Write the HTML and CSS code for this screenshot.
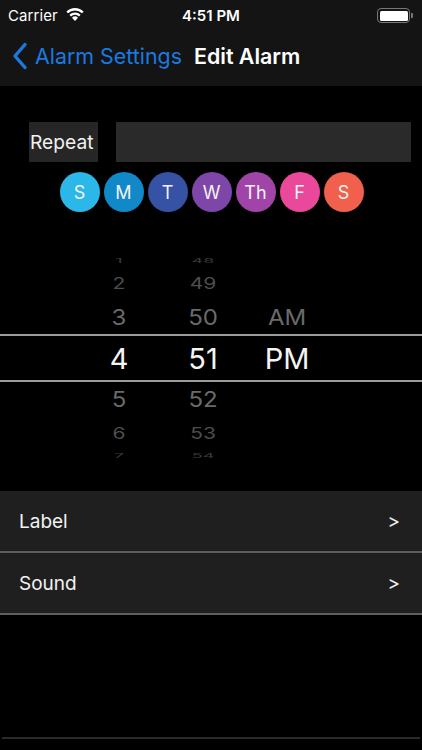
FILE: index.html
```html
<!DOCTYPE html>
<html>
<head>
<meta charset="utf-8">
<link rel="stylesheet" href="styles.css">
</head>
<body>
<div class="screen">
  <header class="top">
    <div class="status">
      <div class="status-left">
        <span class="carrier">Carrier</span>
        <svg class="wifi" width="20" height="15" viewBox="0 0 20 15">
          <path d="M10 14 L7 10.8 A4.3 4.3 0 0 1 13 10.8 Z" fill="#fff"/>
          <path d="M5.2 8.6 A6.9 6.9 0 0 1 14.8 8.6" stroke="#fff" stroke-width="2.3" fill="none"/>
          <path d="M2.2 5.5 A11 11 0 0 1 17.8 5.5" stroke="#fff" stroke-width="2.3" fill="none"/>
        </svg>
      </div>
      <span class="time">4:51 PM</span>
      <div class="battery"><div class="battery-fill"></div><div class="battery-tip"></div></div>
    </div>
    <nav class="navbar">
      <svg class="chev" width="16" height="28" viewBox="0 0 16 28"><path d="M13 2.5 L3 14 L13 25.5" stroke="#1a7ae0" stroke-width="3.4" fill="none" stroke-linecap="round" stroke-linejoin="round"/></svg>
      <span class="back">Alarm Settings</span>
      <span class="title">Edit Alarm</span>
    </nav>
  </header>

  <section class="repeat">
    <div class="repeat-row">
      <div class="repeat-label">Repeat</div>
      <div class="repeat-field"></div>
    </div>
    <div class="days">
      <span class="day d1">S</span>
      <span class="day d2">M</span>
      <span class="day d3">T</span>
      <span class="day d4">W</span>
      <span class="day d5">Th</span>
      <span class="day d6">F</span>
      <span class="day d7">S</span>
    </div>
  </section>

  <section class="picker">
    <div class="prow r0 top0"><span class="c">1</span><span class="c">48</span><span class="c"></span></div>
    <div class="prow r1"><span class="c">2</span><span class="c">49</span><span class="c"></span></div>
    <div class="prow r2"><span class="c">3</span><span class="c">50</span><span class="c">AM</span></div>
    <div class="prow sel"><span class="c">4</span><span class="c">51</span><span class="c">PM</span></div>
    <div class="prow r2"><span class="c">5</span><span class="c">52</span><span class="c"></span></div>
    <div class="prow r1"><span class="c">6</span><span class="c">53</span><span class="c"></span></div>
    <div class="prow r0"><span class="c">7</span><span class="c">54</span><span class="c"></span></div>
  </section>

  <section class="list">
    <div class="item"><span>Label</span><span class="arrow">&gt;</span></div>
    <div class="item"><span>Sound</span><span class="arrow">&gt;</span></div>
  </section>

  <div class="bottom-line"></div>
</div>
</body>
</html>
```
FILE: styles.css
```css
* { box-sizing: border-box; }
html, body { margin: 0; padding: 0; background: #000; }
body { font-family: Inter, "Noto Sans", "Liberation Sans", sans-serif; color: #fff; }
.screen { width: 422px; height: 750px; overflow: hidden; background: #000; display: flex; flex-direction: column; }

.top { background: #141414; height: 86px; flex-shrink: 0; }
.status { height: 30px; display: flex; align-items: center; justify-content: space-between; padding: 0 9px 0 8px; position: relative; }
.status-left { display: flex; align-items: center; gap: 7px; }
.carrier { font-size: 15px; letter-spacing: 0.1px; }
.wifi { margin-top: -2px; }
.time { position: absolute; left: 0; right: 0; text-align: center; font-size: 15px; font-weight: 600; pointer-events: none; }
.battery { display: flex; align-items: center; }
.battery-fill { width: 33px; height: 15px; border: 1.5px solid #777; border-radius: 4px; background: #fff; background-clip: content-box; padding: 1.5px; }
.battery-tip { width: 2px; height: 5px; background: #777; border-radius: 0 1px 1px 0; margin-left: 1px; }

.navbar { height: 52px; display: flex; align-items: center; padding-left: 12px; }
.chev { margin-right: 7px; }
.back { color: #1a7ae0; font-size: 21.4px; margin-right: 12px; }
.title { font-size: 21.4px; font-weight: 600; }

.repeat { padding-top: 36px; flex-shrink: 0; }
.repeat-row { display: flex; height: 40px; padding-left: 29px; gap: 18px; }
.repeat-label { width: 69px; background: #262626; font-size: 19.2px; display: flex; align-items: center; padding-left: 1px; color: #f2f2f2; }
.repeat-field { width: 295px; background: #2a2a2a; }
.days { display: flex; justify-content: center; gap: 4px; margin-top: 10px; padding-left: 1px; }
.day { width: 40px; height: 40px; border-radius: 50%; display: flex; align-items: center; justify-content: center; font-size: 18px; color: #f4f4f4; }
.d1 { background: #2bb7e7; }
.d2 { background: #1189c9; }
.d3 { background: #3552a4; }
.d4 { background: #7e46a8; }
.d5 { background: #a144a7; }
.d6 { background: #ea489b; }
.d7 { background: #f0604c; }

.picker { margin-top: 43px; height: 205px; display: flex; flex-direction: column; overflow: hidden; flex-shrink: 0; }
.prow { display: grid; grid-template-columns: 84px 84px 84px; padding-left: 77px; align-items: center; text-align: center; flex-shrink: 0; }
.prow .c { display: block; }
.r0 { height: 11px; color: #3a3a3a; font-size: 18px; line-height: 11px; overflow: hidden; }
.r0 .c { transform: scaleY(0.35); }
.top0 { align-items: end; }
.r1 { height: 34px; color: #4e4e4e; font-size: 21px; }
.r1 .c { transform: scaleY(0.78); }
.r2 { height: 34px; color: #6a6a6a; font-size: 24px; }
.r2 .c { transform: scaleY(0.92); }
.sel { height: 48px; border-top: 2px solid #9c9c9c; border-bottom: 2px solid #9c9c9c; font-size: 29px; color: #f4f4f4; }

.list { margin-top: 31px; flex-shrink: 0; }
.item { height: 62px; background: #1f1f1f; border-bottom: 2px solid #5e5e5e; display: flex; align-items: center; justify-content: space-between; padding: 0 22px 0 19px; font-size: 19px; color: #f2f2f2; }
.arrow { font-size: 19px; }

.bottom-line { margin: auto 2px 11px; height: 2px; background: #2a2a2a; flex-shrink: 0; }
```
